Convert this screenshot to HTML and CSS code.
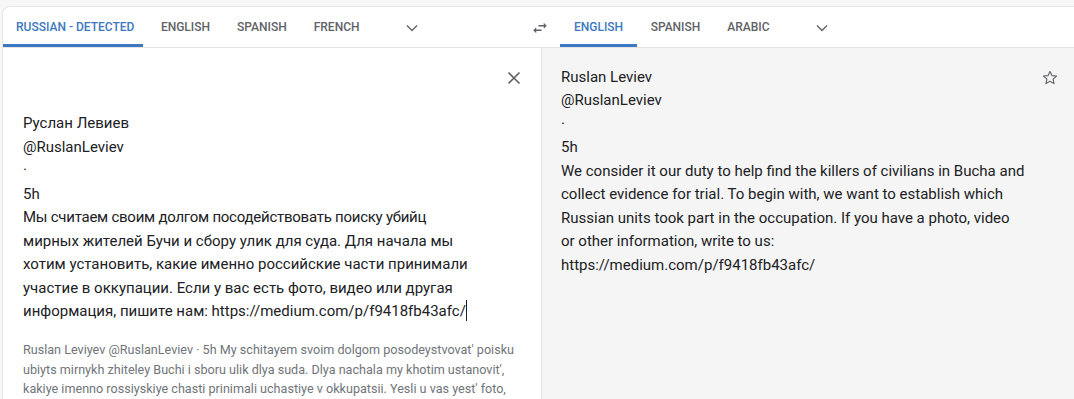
FILE: index.html
```html
<!DOCTYPE html>
<html lang="en">
<head>
    <meta charset="UTF-8">
    <title>Translate</title>
    <link rel="stylesheet" href="styles.css">
</head>
<body>
    <div class="card">
        <div class="header">
            <div class="tabs tabs-src">
                <div class="tab active">Russian - detected</div>
                <div class="tab">English</div>
                <div class="tab">Spanish</div>
                <div class="tab">French</div>
                <div class="more">
                    <svg width="14" height="14" viewBox="0 0 14 14"><polyline points="2,4.5 7,9.5 12,4.5" fill="none" stroke="#5f6368" stroke-width="1.4"/></svg>
                </div>
            </div>
            <div class="swap">
                <svg width="18" height="18" viewBox="0 0 24 24"><path fill="#5f6368" d="M6.99 11L3 15l3.99 4v-3H14v-2H6.99v-3zM21 9l-3.99-4v3H10v2h7.01v3L21 9z"/></svg>
            </div>
            <div class="tabs tabs-tgt">
                <div class="tab active">English</div>
                <div class="tab">Spanish</div>
                <div class="tab">Arabic</div>
                <div class="more">
                    <svg width="14" height="14" viewBox="0 0 14 14"><polyline points="2,4.5 7,9.5 12,4.5" fill="none" stroke="#5f6368" stroke-width="1.4"/></svg>
                </div>
            </div>
        </div>
        <div class="panes">
            <div class="pane source">
                <div class="pane-top">
                    <div class="icon-btn">
                        <svg width="24" height="24" viewBox="0 0 24 24"><path d="M6.5 6.5L17.5 17.5M17.5 6.5L6.5 17.5" stroke="#5f6368" stroke-width="1.6" fill="none"/></svg>
                    </div>
                </div>
                <div class="text">Руслан Левиев<br>@RuslanLeviev<br>·<br>5h<br><span class="tight">Мы считаем своим долгом посодействовать поиску убийц</span><br>мирных жителей Бучи и сбору улик для суда. Для начала мы<br>хотим установить, какие именно российские части принимали<br>участие в оккупации. Если у вас есть фото, видео или другая<br>информация, пишите нам: https://medium.com/p/f9418fb43afc/<span class="caret"></span></div>
                <div class="translit">Ruslan Leviyev @RuslanLeviev · 5h My schitayem svoim dolgom posodeystvovat' poisku<br>ubiyts mirnykh zhiteley Buchi i sboru ulik dlya suda. Dlya nachala my khotim ustanovit',<br>kakiye imenno rossiyskiye chasti prinimali uchastiye v okkupatsii. Yesli u vas yest' foto,</div>
            </div>
            <div class="pane target">
                <div class="text">Ruslan Leviev<br>@RuslanLeviev<br>·<br>5h<br>We consider it our duty to help find the killers of civilians in Bucha and<br>collect evidence for trial. To begin with, we want to establish which<br>Russian units took part in the occupation. If you have a photo, video<br>or other information, write to us:<br>https://medium.com/p/f9418fb43afc/</div>
                <div class="star">
                    <svg width="18" height="18" viewBox="0 0 24 24"><path d="M12 3.2l2.6 5.6 6.1.6-4.6 4.1 1.3 6-5.4-3.1-5.4 3.1 1.3-6-4.6-4.1 6.1-.6z" fill="none" stroke="#5f6368" stroke-width="1.5" stroke-linejoin="round"/></svg>
                </div>
            </div>
        </div>
    </div>
</body>
</html>
```

FILE: styles.css
```css
* {
    box-sizing: border-box;
}
body {
    margin: 0;
    background-color: #f7f7f7;
    font-family: Roboto, 'Liberation Sans', sans-serif;
    color: #202124;
    overflow: hidden;
}
.card {
    margin: 6px 0 0 2px;
    background: white;
    border-top: 1px solid #e6e6e6;
    border-left: 1px solid #e6e6e6;
    border-radius: 8px 0 0 0;
    height: 400px;
}
.header {
    display: flex;
    height: 41px;
    border-bottom: 1px solid #e3e3e3;
}
.tabs {
    display: flex;
    align-items: stretch;
}
.tabs-src {
    width: 517px;
}
.tab {
    display: flex;
    align-items: center;
    padding: 3px 13.5px 0 13.5px;
    font-size: 12px;
    font-weight: 500;
    text-transform: uppercase;
    color: #5f6368;
    border-bottom: 3px solid transparent;
}
.tab.active {
    color: #3d78c1;
    border-bottom-color: #3d78c1;
}
.tabs-src .tab:first-child {
    padding-left: 13px;
    padding-right: 9px;
    margin-right: 4px;
}
.tabs-tgt .tab:first-child {
    padding-left: 14px;
    padding-right: 14px;
}
.more {
    display: flex;
    align-items: center;
    justify-content: center;
    width: 48px;
    margin-left: 15px;
    padding-top: 1px;
}
.swap {
    width: 40px;
    display: flex;
    align-items: center;
    justify-content: center;
    padding-top: 1px;
}
.panes {
    display: flex;
    height: 360px;
}
.pane {
    font-size: 15px;
    line-height: 23.5px;
}
.source {
    width: 538px;
    padding: 18px 15px 0 20px;
}
.pane-top {
    display: flex;
    justify-content: flex-end;
    height: 46px;
}
.icon-btn {
    width: 24px;
    height: 24px;
}
.text {
    white-space: nowrap;
}
.tight {
    letter-spacing: -0.25px;
}
.caret {
    display: inline-block;
    width: 1px;
    height: 21px;
    background: #202124;
    vertical-align: -5px;
}
.translit {
    margin-top: 16.5px;
    font-size: 12.6px;
    line-height: 19.5px;
    color: #70757a;
    white-space: nowrap;
}
.target {
    flex: 1;
    display: flex;
    justify-content: space-between;
    background-color: #f5f5f5;
    border-left: 1px solid #e3e3e3;
    padding: 17.5px 15px 0 19px;
}
.star {
    margin-top: 3px;
}
```
